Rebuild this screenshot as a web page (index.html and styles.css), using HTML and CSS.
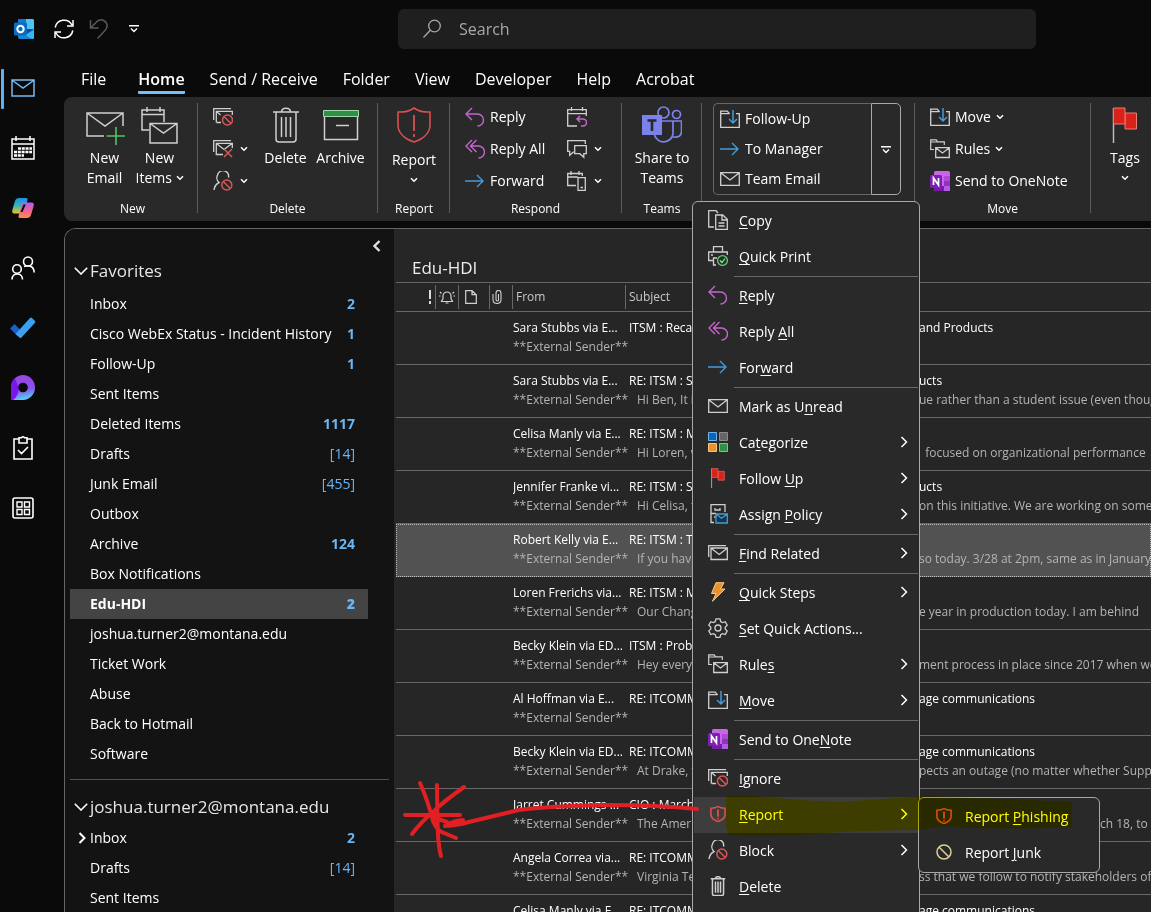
FILE: index.html
```
<!DOCTYPE html>
<html lang="en">
<head>
  <meta charset="utf-8">
  <title>Edu-HDI - Outlook</title>
  <link rel="stylesheet" href="styles.css">
</head>
<body>

  <!-- shared icons -->
  <svg class="sprite" aria-hidden="true">
    <defs>
      <linearGradient id="g-cop1" x1="0" y1="0" x2="0" y2="1"><stop offset="0" stop-color="#1f8fe8"/><stop offset=".5" stop-color="#35b6b0"/><stop offset="1" stop-color="#f5c518"/></linearGradient>
      <linearGradient id="g-cop2" x1="0" y1="0" x2="0" y2="1"><stop offset="0" stop-color="#b45df0"/><stop offset=".5" stop-color="#f0609a"/><stop offset="1" stop-color="#ff8a4a"/></linearGradient>
      <linearGradient id="g-loop" x1=".3" y1="0" x2=".5" y2="1"><stop offset="0" stop-color="#9a45e0"/><stop offset=".6" stop-color="#8a50ee"/><stop offset="1" stop-color="#50d8f8"/></linearGradient>
    </defs>
    <symbol id="chev" viewBox="0 0 8 6"><path d="M1 1.2l3 3 3-3" fill="none" stroke="#fff" stroke-width="1.5"/></symbol>
    <symbol id="arrow-right" viewBox="0 0 8 12"><path d="M1.5 1l5 5-5 5" fill="none" stroke="#fff" stroke-width="1.5"/></symbol>
    <symbol id="more" viewBox="0 0 10 8"><path d="M0 .8h10M2 3.5l3 3 3-3" fill="none" stroke="#fff" stroke-width="1.4"/></symbol>
    <symbol id="mail" viewBox="0 0 20 20"><path d="M.7 3.7h18.6v12.6H.7zM1 4l9 7 9-7" fill="none" stroke="currentColor" stroke-width="1.3"/></symbol>
    <symbol id="reply" viewBox="0 0 20 20"><path d="M7 1L1 7l6 6M1 7h11.5a6 6 0 0 1 0 12" fill="none" stroke="#c565cf" stroke-width="1.4"/></symbol>
    <symbol id="reply-all" viewBox="0 0 20 20"><path d="M7 1L1 7l6 6M11.500 1l-6 6 6 6M6 7h7.500a5.800 5.800 0 0 1 0 12" fill="none" stroke="#c565cf" stroke-width="1.4"/></symbol>
    <symbol id="forward" viewBox="0 0 20 20"><path d="M0 10h18M12 4l6 6-6 6" fill="none" stroke="#459bd8" stroke-width="1.4"/></symbol>
    <symbol id="move" viewBox="0 0 20 20"><path d="M9.500 4.700H19.300v13.600H.7V2.200h6.600l2 2.500M.7 4.700H9" fill="none" stroke="#d0d0d0" stroke-width="1.3"/><path d="M10 3.500h6v8h-6z" fill="#292929"/><path d="M13 1v13M9 10l4 4 4-4" fill="none" stroke="#459bd8" stroke-width="1.5"/></symbol>
    <symbol id="rules" viewBox="0 0 20 20"><path d="M4 10.500H.7V.8h5.500l1.500 2h6.600V6M.7 3h6.500" fill="none" stroke="#d0d0d0" stroke-width="1.2"/><path d="M5.700 8.700h13.600v9.800H5.700zM6 9l6.500 5L19 9" fill="none" stroke="#d0d0d0" stroke-width="1.3"/></symbol>
    <symbol id="onenote" viewBox="0 0 20 20"><rect x="4" width="16" height="20" rx="1.500" fill="#ca64ea"/><path d="M14 5h6v5h-6z" fill="#ae4bd5"/><path d="M14 10h6v5h-6z" fill="#9332bf"/><path d="M4 15h16v3.500a1.500 1.500 0 0 1-1.500 1.500H5.500A1.500 1.500 0 0 1 4 18.500z" fill="#7719aa"/><path d="M14 15h6v5h-6z" fill="#b05ce0"/><rect y="4" width="12" height="13" rx="1.500" fill="#7a1fb0"/><path d="M3.500 14V7l5 7V7" fill="none" stroke="#fff" stroke-width="1.700"/></symbol>
    <symbol id="shield" viewBox="0 0 34 36"><path d="M17 1c4 3 9 4.300 16 4v13c0 8-7 14-16 17C8 32 1 26 1 18V5c7 .3 12-1 16-4z" fill="none" stroke="#d8504f" stroke-width="1.600" vector-effect="non-scaling-stroke"/><path d="M17 8v16M17 27v3" fill="none" stroke="#d8504f" stroke-width="1.800" vector-effect="non-scaling-stroke"/></symbol>
    <symbol id="ignore" viewBox="0 0 20 20"><path d="M.7 13V1.700H18M3.300 15.500V4.300h16V8M3.500 15.500H8M3.500 4.500l4 3.500" fill="none" stroke="#d0d0d0" stroke-width="1.300"/><circle cx="14.500" cy="13" r="5" fill="#292929" stroke="#d95757" stroke-width="1.500"/><path d="M11 9.500l7 7" stroke="#d95757" stroke-width="1.500"/></symbol>
    <symbol id="cleanup" viewBox="0 0 20 20"><path d="M.7 13V1.700H18M10 15.500H3.300V4.300h16V9M3.500 4.500l7.500 6 8-6" fill="none" stroke="#d0d0d0" stroke-width="1.300"/><path d="M11 10l8 8M19 10l-8 8" stroke="#d95757" stroke-width="1.500"/></symbol>
    <symbol id="block" viewBox="0 0 20 20"><path d="M1 19c.5-4 2-6 5-7.500C3.500 9.500 3.500 6 4.500 4A5.600 5.600 0 0 1 15.500 6.500" fill="none" stroke="#d0d0d0" stroke-width="1.400"/><circle cx="13.800" cy="14" r="5" fill="#292929" stroke="#d95757" stroke-width="1.500"/><path d="M10.300 10.500l7 7" stroke="#d95757" stroke-width="1.500"/></symbol>
    <symbol id="trash" viewBox="0 0 26 36"><path d="M0 5h26M8.500 5c0-5 9-5 9 0M3 5v27q0 3 3 3h14q3 0 3-3V5M8.500 10v20M13 10v20M17.500 10v20" fill="none" stroke="#d0d0d0" stroke-width="1.500" vector-effect="non-scaling-stroke"/></symbol>
    <symbol id="flag" viewBox="0 0 26 36"><path d="M1.500 1v35" stroke="#bbb" stroke-width="1.500"/><path d="M13 6h11.500v16H13z" fill="#d9231a" stroke="#f07a74"/><path d="M1.500 1h11.500v16H1.500z" fill="#d9231a" stroke="#f07a74"/></symbol>
  </svg>

  <div class="window">

    <header class="titlebar">
      <svg class="logo" viewBox="0 0 20 20" width="20" height="20"><path d="M5 0h13.500A1.500 1.500 0 0 1 20 1.500V18.500a1.500 1.500 0 0 1-1.500 1.500H6a2 2 0 0 1-2-2V1q0-1 1-1z" fill="#1a84d6"/><path d="M5 0h7v7H4V1z" fill="#1479cc"/><path d="M12 0h6.500q1.500 0 1.500 1.500V11h-8z" fill="#4cc5f5"/><path d="M20 11l-9 5 7.500 4q1.500 0 1.500-1.500z" fill="#35b8f1"/><path d="M12 10h8l-9 6z" fill="#0a4f94"/><rect y="3.500" width="13" height="13" rx="1.500" fill="#0b6cc4"/><circle cx="6.500" cy="10" r="3.200" fill="none" stroke="#fff" stroke-width="2"/></svg>
      <button class="qa" aria-label="Send/Receive All Folders"><svg viewBox="0 0 20 20" width="20" height="20"><path d="M1.200 8.500A9 9 0 0 1 18 6M18.800 11.500A9 9 0 0 1 2 14M19 1v6h-6M1 19v-6h6" fill="none" stroke="#fff" stroke-width="1.500"/></svg></button>
      <button class="qa" aria-label="Undo"><svg viewBox="0 0 20 20" width="20" height="20"><path d="M1.500 1v8h8M1.500 9L8 2.500c4-3.500 9-1 10 3 .6 3-.5 4.500-2 6L8.500 19.500" fill="none" stroke="#5a5a5a" stroke-width="1.500"/></svg></button>
      <button class="qa" aria-label="Customize Quick Access Toolbar"><svg width="10" height="8"><use href="#more"/></svg></button>
      <label class="search">
        <svg viewBox="0 0 20 20" width="20" height="20"><circle cx="12.500" cy="7" r="5.800" fill="none" stroke="#a8a8a8" stroke-width="1.300"/><path d="M8.300 11.200L1.500 18.500" stroke="#a8a8a8" stroke-width="1.300"/></svg>
        <input type="text" placeholder="Search" aria-label="Search">
      </label>
    </header>

    <nav class="rail" aria-label="Apps">
      <button class="active" aria-label="Mail"><svg viewBox="0 0 24 24" width="24" height="24"><path d="M1 4h22v16H1zM1.500 4.500L12 12l10.500-7.500" fill="none" stroke="#77b9f2" stroke-width="1.500"/></svg></button>
      <button aria-label="Calendar"><svg viewBox="0 0 24 24" width="24" height="24"><path d="M1 3h22v20H1zM1 8h22M5 0v5M19 0v5" fill="none" stroke="#fff" stroke-width="1.500"/><path d="M7 12.500h14M3 16h18M3 19.500h10" stroke="#fff" stroke-width="2.500" stroke-dasharray="3 .8"/></svg></button>
      <button aria-label="Copilot"><svg viewBox="0 0 22 20" width="22" height="20"><path d="M7 0h7q2 0 1.500 2L12 14q-.8 1.500-3 1.500H2q-2.500 0-1.500-4L3 3q1-3 4-3z" fill="url(#g-cop1)"/><path d="M15 20H8q-2 0-1.500-2L10 6q.8-1.500 3-1.500h7q2.500 0 1.500 4L19 17q-1 3-4 3z" fill="url(#g-cop2)"/><path d="M11.500 6.500h2.300L10.500 14H8.500z" fill="#0a0a0a"/></svg></button>
      <button aria-label="People"><svg viewBox="0 0 24 24" width="24" height="24"><g fill="none" stroke="#fff" stroke-width="1.600"><circle cx="17" cy="5.500" r="4.500"/><circle cx="6" cy="13" r="4.300"/><path d="M1 23.500c0-7.500 10.500-7.500 10.500 0M13 10.500c5-2 10 0 10.200 6"/></g></svg></button>
      <button aria-label="To Do"><svg viewBox="0 0 26 22" width="26" height="22"><path d="M0 11.500l4.500-4.500 8 8-4.500 4.500z" fill="#1f5fc0"/><path d="M5.500 17L20 1q1-1 2 0l3 3q.8.800 0 1.700L11.500 20.500q-1 1-2 0z" fill="#3ba0ee"/></svg></button>
      <button aria-label="Loop"><svg viewBox="0 0 24 26" width="24" height="26"><path d="M12 0a12 12.500 0 0 1 0 25H0V12.500A12 12.500 0 0 1 12 0z" fill="url(#g-loop)"/><path d="M0 25V12.500Q0 6 4 3l3.500 9.500q0 9-5.500 12.500z" fill="#7c15ee"/><circle cx="12" cy="12.500" r="4.800" fill="#0a0a0a"/></svg></button>
      <button aria-label="Tasks"><svg viewBox="0 0 20 24" width="20" height="24"><path d="M6 3H1v20h18V3h-5M6 1.800h2.500q1.500-2 3 0H14V7H6zM5 14l3.500 3.500L15 11" fill="none" stroke="#fff" stroke-width="1.600"/></svg></button>
      <button aria-label="More apps"><svg viewBox="0 0 22 22" width="22" height="22"><rect x="1" y="1" width="20" height="20" rx="2" fill="none" stroke="#fff" stroke-width="1.600"/><path d="M5 5h5v5H5zM12.500 5h5v5h-5zM5 12.500h5v5H5zM12.500 12.500h5v5h-5z" fill="none" stroke="#fff" stroke-width="1.400"/></svg></button>
    </nav>

    <div class="main">
      <nav class="tabs" aria-label="Ribbon tabs">
        <a href="#file" class="file">File</a>
        <a href="#home" class="current">Home</a>
        <a href="#send">Send / Receive</a>
        <a href="#folder">Folder</a>
        <a href="#view">View</a>
        <a href="#developer">Developer</a>
        <a href="#help">Help</a>
        <a href="#acrobat">Acrobat</a>
      </nav>

      <section class="ribbon">
        <div class="group g-new">
          <div class="group-body">
            <button class="big"><svg viewBox="0 0 40 40" width="40" height="40"><path d="M19 31H2V8h36v13M2 8l18 13L38 8" fill="none" stroke="#d0d0d0" stroke-width="1.500"/><path d="M31 22v18M21.500 31h19" stroke="#52c466" stroke-width="1.600"/></svg>New<br>Email</button>
            <button class="big"><svg viewBox="0 0 40 40" width="40" height="40"><path d="M9 25H2V5h22v12M2 9.500h22M7 2v5M20 2v5" fill="none" stroke="#d0d0d0" stroke-width="1.500"/><path d="M10 18.500h27V38H10zM10 18.500L23.500 28 37 18.500" fill="none" stroke="#d0d0d0" stroke-width="1.500"/></svg>New<br>Items <svg class="chev" width="8" height="6"><use href="#chev"/></svg></button>
          </div>
          <h3>New</h3>
        </div>

        <div class="group g-delete">
          <div class="group-body">
            <div class="stack">
              <button aria-label="Ignore"><svg width="20" height="20"><use href="#ignore"/></svg></button>
              <button aria-label="Clean Up"><svg width="20" height="20"><use href="#cleanup"/></svg><svg class="chev" width="8" height="6"><use href="#chev"/></svg></button>
              <button aria-label="Block"><svg width="20" height="20"><use href="#block"/></svg><svg class="chev" width="8" height="6"><use href="#chev"/></svg></button>
            </div>
            <button class="big"><svg class="pad" width="26" height="36"><use href="#trash"/></svg>Delete</button>
            <button class="big"><svg viewBox="0 0 40 40" width="40" height="40"><path d="M3.500 12v22.500h33V12M15 20.500h13" fill="none" stroke="#d0d0d0" stroke-width="1.500"/><path d="M2.500 5.500h35v6h-35z" fill="#2f9146" stroke="#a0d8aa"/></svg>Archive</button>
          </div>
          <h3>Delete</h3>
        </div>

        <div class="group g-report">
          <div class="group-body">
            <button class="big"><svg class="pad" width="34" height="36"><use href="#shield"/></svg>Report<br><svg class="chev" width="8" height="6"><use href="#chev"/></svg></button>
          </div>
          <h3>Report</h3>
        </div>

        <div class="group g-respond">
          <div class="group-body">
            <div class="stack">
              <button><svg width="20" height="20"><use href="#reply"/></svg>Reply</button>
              <button><svg width="20" height="20"><use href="#reply-all"/></svg>Reply All</button>
              <button><svg width="20" height="20"><use href="#forward"/></svg>Forward</button>
            </div>
            <div class="stack">
              <button aria-label="Meeting"><svg viewBox="0 0 20 20" width="20" height="20"><path d="M10 19H.7V2.700h18.600V9M.7 6.700h18.600M4.500 0v4M15.500 0v4" fill="none" stroke="#d0d0d0" stroke-width="1.300"/><path d="M13 9l-3 3 3 3M10 12h6a3.500 3.500 0 0 1 0 7h-2" fill="none" stroke="#c565cf" stroke-width="1.500"/></svg></button>
              <button aria-label="IM"><svg viewBox="0 0 20 20" width="20" height="20"><path d="M18.300 5V1.700H.7v10.600h2v4l4-3.500M7.700 6.700h11.600v8h-2.500v3.500l-4-3.500H7.700z" fill="none" stroke="#d0d0d0" stroke-width="1.300"/></svg><svg class="chev" width="8" height="6"><use href="#chev"/></svg></button>
              <button aria-label="More"><svg viewBox="0 0 20 20" width="20" height="20"><path d="M9 14.500H.7V2.500h14.600V5M.7 6h10M4 0v4M12 0v4M11 6.700h7.300v12.600H11zM13.500 16.500h2.500" fill="none" stroke="#d0d0d0" stroke-width="1.300"/></svg><svg class="chev" width="8" height="6"><use href="#chev"/></svg></button>
            </div>
          </div>
          <h3>Respond</h3>
        </div>

        <div class="group g-teams">
          <div class="group-body">
            <button class="big"><svg viewBox="0 0 40 40" width="40" height="40"><g fill="none" stroke="#7b83eb" stroke-width="1.700"><circle cx="21.500" cy="7.500" r="5.500"/><circle cx="34.500" cy="9.500" r="4"/><path d="M20 16h11v13a9.500 9.500 0 0 1-18.500 1M31 16h8.500v11q-.5 6-8.500 5"/></g><path d="M0 10h20v20H0z" fill="#7b83eb"/><path d="M5.500 15.500h9M10 15.500V26" stroke="#292929" stroke-width="2.600"/></svg>Share to<br>Teams</button>
          </div>
          <h3>Teams</h3>
        </div>

        <div class="group g-steps">
          <div class="group-body">
            <div class="gallery">
              <div class="gallery-list">
                <button><svg width="20" height="20"><use href="#move"/></svg>Follow-Up</button>
                <button><svg width="20" height="20"><use href="#forward"/></svg>To Manager</button>
                <button><svg class="grey" width="20" height="20"><use href="#mail"/></svg>Team Email</button>
              </div>
              <button class="gallery-more" aria-label="More quick steps"><svg width="10" height="8"><use href="#more"/></svg></button>
            </div>
          </div>
          <h3>Quick Steps</h3>
        </div>

        <div class="group g-move">
          <div class="group-body">
            <div class="stack">
              <button><svg width="20" height="20"><use href="#move"/></svg>Move<svg class="chev" width="8" height="6"><use href="#chev"/></svg></button>
              <button><svg width="20" height="20"><use href="#rules"/></svg>Rules<svg class="chev" width="8" height="6"><use href="#chev"/></svg></button>
              <button><svg width="20" height="20"><use href="#onenote"/></svg>Send to OneNote</button>
            </div>
          </div>
          <h3>Move</h3>
        </div>

        <div class="group g-tags">
          <div class="group-body">
            <button class="big"><svg class="pad" width="26" height="36"><use href="#flag"/></svg>Tags<br><svg class="chev" width="8" height="6"><use href="#chev"/></svg></button>
          </div>
        </div>
      </section>

      <div class="panes">
        <aside class="folders">
          <button class="collapse" aria-label="Minimize folder pane"><svg viewBox="0 0 8 12" width="8" height="12"><path d="M6.500 1l-5 5 5 5" fill="none" stroke="#e0e0e0" stroke-width="2.400"/></svg></button>
          <h2><svg viewBox="0 0 14 8" width="14" height="8"><path d="M.8.800L7 7 13.200.8" fill="none" stroke="#fff" stroke-width="1.600"/></svg>Favorites</h2>
          <ul>
            <li><a href="#">Inbox</a><b>2</b></li>
            <li><a href="#">Cisco WebEx Status - Incident History</a><b>1</b></li>
            <li><a href="#">Follow-Up</a><b>1</b></li>
            <li><a href="#">Sent Items</a></li>
            <li><a href="#">Deleted Items</a><b>1117</b></li>
            <li><a href="#">Drafts</a><span>[14]</span></li>
            <li><a href="#">Junk Email</a><span>[455]</span></li>
            <li><a href="#">Outbox</a></li>
            <li><a href="#">Archive</a><b>124</b></li>
            <li><a href="#">Box Notifications</a></li>
            <li class="selected"><a href="#">Edu-HDI</a><b>2</b></li>
            <li><a href="#">joshua.turner2@montana.edu</a></li>
            <li><a href="#">Ticket Work</a></li>
            <li><a href="#">Abuse</a></li>
            <li><a href="#">Back to Hotmail</a></li>
            <li><a href="#">Software</a></li>
          </ul>
          <hr>
          <h2><svg viewBox="0 0 14 8" width="14" height="8"><path d="M.8.800L7 7 13.200.8" fill="none" stroke="#fff" stroke-width="1.600"/></svg>joshua.turner2@montana.edu</h2>
          <ul>
            <li class="expandable"><svg viewBox="0 0 8 12" width="8" height="12"><path d="M1.500 1l5 5-5 5" fill="none" stroke="#fff" stroke-width="2"/></svg><a href="#">Inbox</a><b>2</b></li>
            <li><a href="#">Drafts</a><span>[14]</span></li>
            <li><a href="#">Sent Items</a></li>
          </ul>
        </aside>

        <section class="messages">
          <h1>Edu-HDI</h1>
          <table>
            <colgroup><col class="c-flag"><col class="c-bell"><col class="c-icon"><col class="c-clip"><col class="c-from"><col></colgroup>
            <thead>
              <tr>
                <th class="right" aria-label="Importance"><svg viewBox="0 0 4 14" width="4" height="14"><path d="M2 0v9M2 11v3" stroke="#ddd" stroke-width="2"/></svg></th>
                <th aria-label="Reminder"><svg viewBox="0 0 16 14" width="16" height="14"><path d="M2.500 11.500h11l-1.500-3V6a4 4 0 0 0-8 0v2.500zM6.500 13h3M1 2l1.500 1.500M15 2l-1.500 1.500M0 6h1.500M14.500 6H16" fill="none" stroke="#d0d0d0" stroke-width="1.200"/></svg></th>
                <th class="page" aria-label="Icon"><svg viewBox="0 0 12 14" width="12" height="14"><path d="M.7.700H7l4.300 4v8.600H.7zM7 .7v4h4.300" fill="none" stroke="#d0d0d0" stroke-width="1.200"/></svg></th>
                <th class="clip" aria-label="Attachment"><svg viewBox="0 0 10 14" width="10" height="14"><path d="M1 4v5.500q0 4 4 4t4-4v-6q0-3-2.500-3T4 3.500v6q0 1.500 1.300 1.500T6.500 9.500V4" fill="none" stroke="#d0d0d0" stroke-width="1.100"/></svg></th>
                <th class="text">From</th>
                <th class="text">Subject</th>
              </tr>
            </thead>
            <tbody>
              <tr><td colspan="4"></td><td>Sara Stubbs via E...</td><td><span class="start">ITSM : Recap of Services</span>and Products</td></tr>
              <tr class="preview"><td colspan="4"></td><td colspan="2"><i>**External Sender**</i></td></tr>
            </tbody>
            <tbody>
              <tr><td colspan="4"></td><td>Sara Stubbs via E...</td><td><span class="start">RE: ITSM : Services</span>ucts</td></tr>
              <tr class="preview"><td colspan="4"></td><td colspan="2"><i>**External Sender**</i><span class="start">Hi Ben, It is an iss</span>ue rather than a student issue (even though</td></tr>
            </tbody>
            <tbody>
              <tr><td colspan="4"></td><td>Celisa Manly via E...</td><td>RE: ITSM : Metrics</td></tr>
              <tr class="preview"><td colspan="4"></td><td colspan="2"><i>**External Sender**</i><span class="start">Hi Loren, we are</span>&nbsp; focused on organizational performance</td></tr>
            </tbody>
            <tbody>
              <tr><td colspan="4"></td><td>Jennifer Franke vi...</td><td><span class="start">RE: ITSM : Services</span>ucts</td></tr>
              <tr class="preview"><td colspan="4"></td><td colspan="2"><i>**External Sender**</i><span class="start">Hi Celisa, thanks</span>on this initiative. We are working on some</td></tr>
            </tbody>
            <tbody class="selected">
              <tr><td colspan="4"></td><td>Robert Kelly via E...</td><td>RE: ITSM : Tools</td></tr>
              <tr class="preview"><td colspan="4"></td><td colspan="2"><i>**External Sender**</i><span class="start">If you have time</span>so today. 3/28 at 2pm, same as in January</td></tr>
            </tbody>
            <tbody>
              <tr><td colspan="4"></td><td>Loren Frerichs via...</td><td>RE: ITSM : Metrics</td></tr>
              <tr class="preview"><td colspan="4"></td><td colspan="2"><i>**External Sender**</i><span class="start">Our Change</span>e year in production today. I am behind</td></tr>
            </tbody>
            <tbody>
              <tr><td colspan="4"></td><td>Becky Klein via ED...</td><td>ITSM : Problem</td></tr>
              <tr class="preview"><td colspan="4"></td><td colspan="2"><i>**External Sender**</i><span class="start">Hey everyone</span>ment process in place since 2017 when we</td></tr>
            </tbody>
            <tbody>
              <tr><td colspan="4"></td><td>Al Hoffman via E...</td><td><span class="start">RE: ITCOMM</span>age communications</td></tr>
              <tr class="preview"><td colspan="4"></td><td colspan="2"><i>**External Sender**</i></td></tr>
            </tbody>
            <tbody>
              <tr><td colspan="4"></td><td>Becky Klein via ED...</td><td><span class="start">RE: ITCOMM</span>age communications</td></tr>
              <tr class="preview"><td colspan="4"></td><td colspan="2"><i>**External Sender**</i><span class="start">At Drake, we</span>pects an outage (no matter whether Support</td></tr>
            </tbody>
            <tbody>
              <tr><td colspan="4"></td><td>Jarret Cummings ...</td><td>CIO : March</td></tr>
              <tr class="preview"><td colspan="4"></td><td colspan="2"><i>**External Sender**</i><span class="start long">The American Council, Mar</span>ch 18, to</td></tr>
            </tbody>
            <tbody>
              <tr><td colspan="4"></td><td>Angela Correa via...</td><td>RE: ITCOMM</td></tr>
              <tr class="preview"><td colspan="4"></td><td colspan="2"><i>**External Sender**</i><span class="start">Virginia Tech</span>ss that we follow to notify stakeholders of</td></tr>
            </tbody>
            <tbody>
              <tr><td colspan="4"></td><td>Celisa Manly via E...</td><td><span class="start">RE: ITCOMM</span>age communications</td></tr>
              <tr class="preview"><td colspan="4"></td><td colspan="2"><i>**External Sender**</i></td></tr>
            </tbody>
          </table>
        </section>
      </div>
    </div>

    <div class="menu context" role="menu">
      <button role="menuitem"><svg viewBox="0 0 20 20" width="20" height="20"><path d="M6 17H.7V.7H8l2 2.300M7.700 5h7l4.600 4.300v10H7.700zM14 5v5h5M10.500 13h6M10.500 16h6" fill="none" stroke="#d0d0d0" stroke-width="1.300"/></svg><span><u>C</u>opy</span></button>
      <button role="menuitem"><svg viewBox="0 0 20 20" width="20" height="20"><path d="M5.500 6V.7h9V6M5 14.500H.7V6h18.600v3M3 9h2M8 19H5.500v-7H9" fill="none" stroke="#d0d0d0" stroke-width="1.300"/><circle cx="14.500" cy="14.500" r="4.900" fill="#173d20" stroke="#6cc57c" stroke-width="1.300"/><path d="M12 14.500l2 2 3-4" fill="none" stroke="#9be0a8" stroke-width="1.200"/></svg><span><u>Q</u>uick Print</span></button>
      <hr>
      <button role="menuitem"><svg width="20" height="20"><use href="#reply"/></svg><span><u>R</u>eply</span></button>
      <button role="menuitem"><svg width="20" height="20"><use href="#reply-all"/></svg><span>Reply <u>A</u>ll</span></button>
      <button role="menuitem"><svg width="20" height="20"><use href="#forward"/></svg><span>For<u>w</u>ard</span></button>
      <hr>
      <button role="menuitem"><svg class="grey" width="20" height="20"><use href="#mail"/></svg><span>Mark as U<u>n</u>read</span></button>
      <button role="menuitem"><svg viewBox="0 0 20 20" width="20" height="20"><path d="M.5.500h8v8h-8z" fill="#0b65b8" stroke="#6db4ee"/><path d="M11.500.500h8v8h-8z" fill="#666" stroke="#8c8c8c"/><path d="M.5 11.500h8v8h-8z" fill="#e8912d" stroke="#f5c877"/><path d="M11.500 11.500h8v8h-8z" fill="#2f9146" stroke="#72cc85"/></svg><span>Ca<u>t</u>egorize</span><svg class="sub" width="8" height="12"><use href="#arrow-right"/></svg></button>
      <button role="menuitem"><svg width="20" height="20"><use href="#flag"/></svg><span>Follow <u>U</u>p</span><svg class="sub" width="8" height="12"><use href="#arrow-right"/></svg></button>
      <button role="menuitem"><svg viewBox="0 0 20 20" width="20" height="20"><path d="M6 18.500H3V.7h14V8M7 4v2h5V4M3 9.500h5M7 14v-2" fill="none" stroke="#d0d0d0" stroke-width="1.300"/><path d="M8 10h11.300v9H8zM8.300 10.300l5.300 4 5.300-4" fill="#12344f" stroke="#459bd8" stroke-width="1.300"/></svg><span>Assign <u>P</u>olicy</span><svg class="sub" width="8" height="12"><use href="#arrow-right"/></svg></button>
      <hr>
      <button role="menuitem"><svg viewBox="0 0 20 20" width="20" height="20"><path d="M.7 14V2.700H18M3 5h16.300v11.500H3zM3.500 5.500l7.700 6 7.700-6" fill="none" stroke="#d0d0d0" stroke-width="1.300"/></svg><span><u>F</u>ind Related</span><svg class="sub" width="8" height="12"><use href="#arrow-right"/></svg></button>
      <hr>
      <button role="menuitem"><svg viewBox="0 0 20 20" width="20" height="20"><path d="M8 .7h8L12.500 7H17L4.500 19.300 8 11.500H3.500z" fill="#e8912d" stroke="#f8cf80"/></svg><span><u>Q</u>uick Steps</span><svg class="sub" width="8" height="12"><use href="#arrow-right"/></svg></button>
      <button role="menuitem"><svg viewBox="0 0 20 20" width="20" height="20"><path d="M8 .8h4l.7 2.700 1.800 1 2.700-.8 2 3.500-2 2v1.800l2 2-2 3.500-2.700-.8-1.800 1-.7 2.600H8l-.7-2.600-1.800-1-2.700.8-2-3.500 2-2V9.200l-2-2 2-3.500 2.700.8 1.800-1z" fill="none" stroke="#d0d0d0" stroke-width="1.300"/><circle cx="10" cy="10" r="3" fill="none" stroke="#d0d0d0" stroke-width="1.300"/></svg><span><u>S</u>et Quick Actions...</span></button>
      <button role="menuitem"><svg width="20" height="20"><use href="#rules"/></svg><span>Rule<u>s</u></span><svg class="sub" width="8" height="12"><use href="#arrow-right"/></svg></button>
      <button role="menuitem"><svg width="20" height="20"><use href="#move"/></svg><span><u>M</u>ove</span><svg class="sub" width="8" height="12"><use href="#arrow-right"/></svg></button>
      <hr>
      <button role="menuitem"><svg width="20" height="20"><use href="#onenote"/></svg><span>Send to One<u>N</u>ote</span></button>
      <hr>
      <button role="menuitem"><svg width="20" height="20"><use href="#ignore"/></svg><span><u>I</u>gnore</span></button>
      <button role="menuitem" class="hover"><svg width="20" height="16"><use href="#shield"/></svg><span><u>R</u>eport</span><svg class="sub" width="8" height="12"><use href="#arrow-right"/></svg></button>
      <button role="menuitem"><svg width="20" height="20"><use href="#block"/></svg><span>Block</span><svg class="sub" width="8" height="12"><use href="#arrow-right"/></svg></button>
      <button role="menuitem"><svg width="20" height="20"><use href="#trash"/></svg><span><u>D</u>elete</span></button>
    </div>

    <div class="menu submenu" role="menu">
      <button role="menuitem"><svg width="20" height="16"><use href="#shield"/></svg><span>Report <u>P</u>hishing</span></button>
      <button role="menuitem"><svg viewBox="0 0 20 20" width="20" height="20"><circle cx="10" cy="10" r="7" fill="none" stroke="#e0cf9a" stroke-width="1.500"/><path d="M5 5l10 10" stroke="#e0cf9a" stroke-width="1.500"/></svg><span>Report <u>J</u>unk</span></button>
    </div>

    <!-- marker and pen annotations -->
    <svg class="ink marker" viewBox="0 0 380 50" width="380" height="50"><path d="M7 4q20-1 40 1 40 4 75 5 25-2 72-5 15-2 20-1 6 0 20 1 80 3 119 5v25q-80 3-115 0-12-1-14-1-16 3-30 4-70 1-100 4-45 3-84 1l-3-7z" fill="#ff0"/></svg>
    <svg class="ink pen" viewBox="0 0 300 84" width="300" height="84"><g fill="none" stroke="#e21f22" stroke-width="4" stroke-linecap="round" stroke-linejoin="round"><path d="M19 7q8 18 13 38 4 10 11 12l12 5M36 9q0 26 1 50 1 14 3 21M63 11Q42 26 33 35 20 46 11 58M4 39h55M296 33q-40-4-86-4-65 1-92 5l-50 12q-10 3-24 4 10-6 18-6M44 50q8-1 13-3M34 42l12 4"/></g></svg>
  </div>

</body>
</html>
```

FILE: styles.css
```
* {
  box-sizing: border-box;
}

body {
  margin: 0;
  background: #0a0a0a;
  color: #fff;
  font-family: "Open Sans", "Noto Sans", sans-serif;
  font-size: 14px;
  line-height: 20px;
}

button {
  background: none;
  border: none;
  padding: 0;
  margin: 0;
  color: inherit;
  font: inherit;
}

a {
  color: inherit;
  text-decoration: none;
}

h1, h2, h3, ul {
  margin: 0;
  padding: 0;
  font-weight: normal;
}

svg {
  flex: none;
}

.sprite {
  position: absolute;
  width: 0;
  height: 0;
}

.grey {
  color: #d0d0d0;
}

.window {
  position: relative;
  display: grid;
  grid-template-columns: 64px 1fr;
  grid-template-rows: 58px 1fr;
  height: 100vh;
  overflow: hidden;
}

/* title bar */
.titlebar {
  grid-column: 1 / 3;
  display: flex;
  align-items: center;
  padding: 0 115px 0 14px;
}

.qa {
  display: flex;
  justify-content: center;
  width: 20px;
  margin-left: 20px;
}

.qa + .qa {
  margin-left: 15px;
}

.search {
  display: flex;
  align-items: center;
  flex: 1;
  height: 40px;
  margin-left: 254px;
  padding-left: 24px;
  gap: 17px;
  background: #1f1f1f;
  border-radius: 6px;
}

.search input {
  flex: 1;
  background: none;
  border: none;
  padding: 0;
  outline: none;
  color: #fff;
  font: inherit;
  font-size: 16px;
}

.search input::placeholder {
  color: #a8a8a8;
}

/* app rail */
.rail button {
  display: flex;
  align-items: center;
  justify-content: center;
  width: 46px;
  height: 60px;
}

.rail .active {
  position: relative;
}

.rail .active::before {
  content: "";
  position: absolute;
  left: 1px;
  top: 11px;
  width: 3px;
  height: 40px;
  background: #60b0f4;
  border-radius: 1px;
}

.main {
  display: flex;
  flex-direction: column;
  min-width: 0;
  min-height: 0;
}

.tabs {
  display: flex;
  gap: 25px;
  height: 39px;
  flex: none;
  padding: 11px 0 0 17px;
  font-size: 16px;
}

.tabs a {
  height: 25px;
}

.tabs .file {
  padding-right: 7px;
}

.tabs .current {
  font-weight: 600;
  border-bottom: 3px solid #77bdf8;
  border-radius: 1px;
}

/* ribbon */
.ribbon {
  display: flex;
  flex: none;
  padding-top: 4px;
  background: #292929;
  border-radius: 8px 0 0 8px;
}

.group {
  position: relative;
  flex: none;
}

.group::after {
  content: "";
  position: absolute;
  right: 0;
  top: 2px;
  width: 1px;
  height: 110px;
  background: #5c5c5c;
}

.g-new { width: 134px; padding-left: 13px; }
.g-delete { width: 180px; padding-left: 15px; }
.g-report { width: 72px; }
.g-respond { width: 172px; padding-left: 15px; }
.g-teams { width: 80px; }
.g-steps { width: 213px; padding-left: 11px; }
.g-move { width: 176px; padding-left: 15px; }
.g-tags { width: 68px; }
.g-tags::after { display: none; }
.g-new h3 { margin-left: -10px; }
.g-delete h3, .g-respond h3, .g-move h3 { margin-left: -16px; }

.group-body {
  display: flex;
  height: 96px;
}

.group h3 {
  font-size: 12px;
  line-height: 24px;
  text-align: center;
}

.big {
  width: 55px;
  padding-top: 4px;
  align-self: flex-start;
  white-space: nowrap;
}

.g-report .big, .g-teams .big, .g-tags .big {
  width: 100%;
}

.big > svg:first-child {
  display: block;
  margin: 0 auto 3px;
}

.g-report .big > svg:first-child {
  margin-bottom: 5px;
}

.big .pad {
  padding: 0;
  border: 2px solid transparent;
  border-width: 2px 0;
  height: 40px;
}

.chev {
  vertical-align: 2px;
}

.stack {
  display: flex;
  flex-direction: column;
}

.stack button {
  display: flex;
  align-items: center;
  gap: 5px;
  height: 32px;
}

.g-delete .stack {
  width: 45px;
}

.g-delete .stack button, .g-respond .stack + .stack button {
  gap: 7px;
}

.g-respond .stack:first-child {
  width: 102px;
}

.gallery {
  display: flex;
  width: 188px;
  height: 92px;
  margin-top: 2px;
}

.gallery-list {
  flex: 1;
  padding-left: 6px;
  border: 1px solid #666;
  border-right: none;
  border-radius: 5px 0 0 5px;
}

.gallery-list button {
  display: flex;
  align-items: center;
  gap: 5px;
  height: 30px;
}

.gallery-more {
  width: 30px;
  border: 1px solid #a8a8a8;
  border-radius: 0 5px 5px 0;
}

/* folder pane */
.panes {
  display: flex;
  flex: 1;
  min-height: 0;
  margin-top: 7px;
  border: 1px solid #666;
  border-width: 1px 0 0 1px;
  border-radius: 12px 0 0 0;
  overflow: hidden;
}

.folders {
  flex: none;
  width: 329px;
  background: #131313;
  padding: 11px 5px 0;
}

.collapse {
  display: block;
  height: 12px;
  margin: 0 8px 0 auto;
}

.collapse svg {
  display: block;
}

.folders h2 {
  display: flex;
  align-items: center;
  gap: 2px;
  height: 37px;
  padding-left: 4px;
  font-size: 17px;
  color: #e6e6e6;
}

.folders ul {
  list-style: none;
}

.folders li {
  display: flex;
  align-items: center;
  justify-content: space-between;
  height: 30px;
  margin-right: 21px;
  padding: 0 13px 0 20px;
  white-space: nowrap;
}

.folders li b, .folders li span {
  color: #69b6f5;
}

.folders .selected {
  background: #444;
  font-weight: bold;
}

.folders .expandable {
  padding-left: 8px;
  gap: 4px;
}

.expandable a {
  flex: 1;
}

.folders hr {
  height: 1px;
  margin: 10px 0 11px;
  border: none;
  background: #505050;
}

.folders hr + h2 {
  height: 32px;
}

/* message list */
.messages {
  flex: 1;
  min-width: 0;
  padding-left: 2px;
  background: #262626;
  overflow: hidden;
}

.messages h1 {
  padding: 27px 0 2px 16px;
  font-size: 17px;
  line-height: 24px;
  color: #ececec;
}

table {
  width: 100%;
  table-layout: fixed;
  border-collapse: collapse;
  font-size: 12px;
}

.c-flag { width: 40px; }
.c-bell { width: 23px; }
.c-icon { width: 31px; }
.c-clip { width: 23px; }
.c-from { width: 113px; }

th, td {
  padding: 0;
  text-align: left;
  font-weight: normal;
  white-space: nowrap;
}

thead tr {
  height: 29px;
  border-top: 1px solid #686868;
  border-bottom: 1px solid #686868;
}

th {
  padding-left: 3px;
  background: linear-gradient(#686868, #686868) right 2px / 1px 24px no-repeat;
  color: #c8c8c8;
}

th svg {
  display: block;
}

th.page {
  padding-left: 6px;
}

th.clip {
  padding-left: 2px;
}

th:last-child {
  background: none;
}

th.right svg {
  margin-left: 29px;
}

tbody {
  border-bottom: 1px solid #686868;
}

td {
  overflow: hidden;
  line-height: 18px;
  vertical-align: bottom;
}

tbody tr:first-child {
  height: 25px;
}

tbody tr:first-child td:nth-child(3) {
  padding-left: 3px;
}

tbody .preview {
  height: 28px;
  color: #b4b4b4;
}

.preview td {
  vertical-align: top;
  line-height: 20px;
}

.preview i {
  display: inline-block;
  width: 124px;
  font-style: normal;
}

.start {
  display: inline-block;
  width: 290px;
  overflow: hidden;
  vertical-align: top;
}

.preview .start {
  width: 282px;
}

.preview .start.long {
  width: 463px;
}

tbody.selected {
  background: #525252;
  outline: 1px dotted #bbb;
  outline-offset: -1px;
}

/* menus */
.menu {
  position: absolute;
  background: #292929;
  border: 1px solid #a8a8a8;
  border-radius: 6px;
  padding: 1px;
}

.menu button {
  display: flex;
  align-items: center;
  gap: 11px;
  width: 100%;
  height: 36px;
  padding: 0 10px 0 14px;
  text-align: left;
}

.menu button span {
  flex: 1;
}

.menu button svg {
  margin-bottom: 3px;
}

.menu u {
  text-underline-offset: 2px;
}

.menu hr {
  height: 1px;
  margin: 1px 0 1px 40px;
  border: none;
  background: #686868;
}

.menu .hover {
  background: #3d3d3d;
}

.context {
  left: 692px;
  top: 201px;
  width: 228px;
  height: 740px;
}

.submenu {
  left: 918px;
  top: 797px;
  width: 182px;
}

.ink {
  position: absolute;
  pointer-events: none;
}

.marker {
  left: 719px;
  top: 792px;
  mix-blend-mode: multiply;
}

.pen {
  left: 401px;
  top: 776px;
}
```
